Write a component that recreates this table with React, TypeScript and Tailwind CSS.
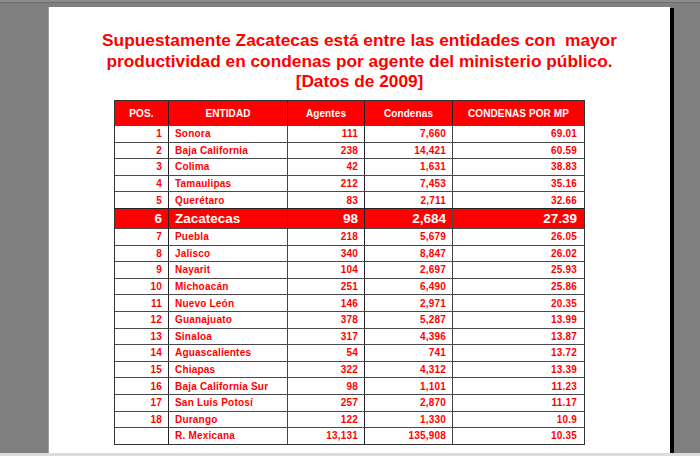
const rows = [
  ["1", "Sonora", "111", "7,660", "69.01"],
  ["2", "Baja California", "238", "14,421", "60.59"],
  ["3", "Colima", "42", "1,631", "38.83"],
  ["4", "Tamaulipas", "212", "7,453", "35.16"],
  ["5", "Querétaro", "83", "2,711", "32.66"],
  ["6", "Zacatecas", "98", "2,684", "27.39"],
  ["7", "Puebla", "218", "5,679", "26.05"],
  ["8", "Jalisco", "340", "8,847", "26.02"],
  ["9", "Nayarit", "104", "2,697", "25.93"],
  ["10", "Michoacán", "251", "6,490", "25.86"],
  ["11", "Nuevo León", "146", "2,971", "20.35"],
  ["12", "Guanajuato", "378", "5,287", "13.99"],
  ["13", "Sinaloa", "317", "4,396", "13.87"],
  ["14", "Aguascalientes", "54", "741", "13.72"],
  ["15", "Chiapas", "322", "4,312", "13.39"],
  ["16", "Baja California Sur", "98", "1,101", "11.23"],
  ["17", "San Luis Potosí", "257", "2,870", "11.17"],
  ["18", "Durango", "122", "1,330", "10.9"],
  ["", "R. Mexicana", "13,131", "135,908", "10.35"],
];

const cols = "grid grid-cols-[53px_119px_77px_88px_132px]";

function Row({ r }: { r: string[] }) {
  const hl = r[1] === "Zacatecas";
  return (
    <div
      className={`${cols} box-border border-t ${
        hl
          ? "h-[20px] border-[#222] bg-[#ff0000] text-white text-[13.5px] font-bold"
          : "h-[16.6px] border-[#4a4a4a] text-[#ff0000] text-[10px] font-bold tracking-[0.2px]"
      }`}
    >
      <div className="flex items-center justify-end pr-[6px]">{r[0]}</div>
      <div className="flex items-center border-l border-[#222] pl-[6px]">{r[1]}</div>
      <div className="flex items-center justify-end border-l border-[#444] pr-[6px]">{r[2]}</div>
      <div className="flex items-center justify-end border-l border-[#222] pr-[6px]">{r[3]}</div>
      <div className="flex items-center justify-end border-l border-[#444] pr-[7px]">{r[4]}</div>
    </div>
  );
}

export default function App() {
  return (
    <div className="relative h-[456px] w-[700px] overflow-hidden bg-[#808080] font-['Liberation_Sans',Arial,sans-serif]">
      <div className="h-[2px] bg-[#8c8c8c]" />
      <div className="h-[1px] bg-[#6e6e6e]" />
      <div className="pl-[48px] pt-[4px]">
        <div className="box-border h-[446px] w-[622px] border-l border-[#a0a0a0] bg-white pt-[23px] shadow-[4px_1px_0_#000]">
          <h1 className="text-center text-[17.3px] font-bold leading-[20.5px] text-[#ff0000]">
            Supuestamente Zacatecas está entre las entidades con&nbsp; mayor
            <br />
            productividad en condenas por agente del ministerio público.
            <br />
            [Datos de 2009]
          </h1>
          <div className="ml-[65px] mt-[8.5px] box-border w-[471px] border border-[#333]">
            <div className={`${cols} h-[24px] bg-[#ff0000] text-[10px] font-bold tracking-[0.1px] text-white`}>
              <div className="flex items-center justify-center">POS.</div>
              <div className="flex items-center justify-center border-l border-[#222]">ENTIDAD</div>
              <div className="flex items-center justify-center border-l border-[#222]">Agentes</div>
              <div className="flex items-center justify-center border-l border-[#222]">Condenas</div>
              <div className="flex items-center justify-center border-l border-[#222]">CONDENAS POR MP</div>
            </div>
            {rows.map((r) => (
              <Row key={r[1]} r={r} />
            ))}
          </div>
        </div>
      </div>
      <div className="absolute bottom-0 left-0 h-[3px] w-full bg-[#dcdcdc]" />
    </div>
  );
}
